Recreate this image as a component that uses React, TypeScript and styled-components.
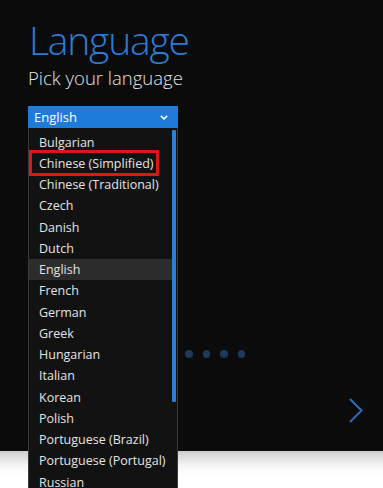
import React from "react";
import styled, { createGlobalStyle } from "styled-components";

const Global = createGlobalStyle`
  html, body { margin: 0; padding: 0; background: #ffffff; }
  body { font-family: "Open Sans", "Noto Sans", sans-serif; }
`;

const Page = styled.div`
  width: 383px;
  height: 488px;
  display: flex;
  flex-direction: column;
  overflow: hidden;
`;

const Screen = styled.section`
  height: 451px;
  background: #0b0b0b;
  display: flex;
  flex-direction: column;
  padding: 0 0 0 28px;
  box-sizing: border-box;
`;

const Shade = styled.div`
  flex: 1;
  background: linear-gradient(#cdcdcd 0px, #f4f4f4 14px, #ffffff 24px);
`;

const Title = styled.h1`
  margin: 15px 0 0 1px;
  font-family: "Open Sans", sans-serif;
  font-weight: 300;
  font-size: 39px;
  line-height: 50px;
  color: #2a7dd4;
  letter-spacing: -1.2px;
`;

const Subtitle = styled.h2`
  margin: 0 0 0 0;
  font-family: "Open Sans", sans-serif;
  font-weight: 300;
  font-size: 18.5px;
  line-height: 26px;
  color: #e2e2e2;
`;

const SelectWrap = styled.div`
  position: relative;
  margin-top: 15px;
  width: 150px;
  z-index: 2;
`;

const Select = styled.div`
  height: 22px;
  background: #1f7ad8;
  display: flex;
  align-items: center;
  justify-content: space-between;
  padding: 0 10px 0 6px;
  color: #ffffff;
  font-size: 13px;
`;

const Menu = styled.div`
  position: absolute;
  top: 22px;
  left: 0;
  width: 150px;
  box-sizing: border-box;
  background: #121212;
  border: 1px solid #3a3a3a;
  border-top: none;
  display: flex;
`;

const Items = styled.ul`
  list-style: none;
  margin: 0;
  padding: 3.6px 0 0 0;
  flex: 1;
`;

const Item = styled.li<{ $active?: boolean; $marked?: boolean }>`
  position: relative;
  height: 21.25px;
  line-height: 21.25px;
  padding-left: 10px;
  font-size: 12.5px;
  color: #e4e4e4;
  white-space: nowrap;
  background: ${(p) => (p.$active ? "#2c2c2c" : "transparent")};
  ${(p) =>
    p.$marked
      ? `&::after {
          content: "";
          position: absolute;
          left: 0;
          top: -2.6px;
          width: 130px;
          height: 26px;
          box-sizing: border-box;
          border: 3px solid #e01515;
        }`
      : ""}
`;

const Track = styled.div`
  width: 5px;
  padding-top: 2px;
`;

const Thumb = styled.div`
  width: 4px;
  height: 272px;
  background: #2b7fd6;
  border-radius: 1px;
`;

const Dots = styled.div`
  display: flex;
  gap: 10px;
  margin-top: 222px;
  padding-left: 157px;
`;

const Dot = styled.span`
  width: 7.5px;
  height: 7.5px;
  border-radius: 50%;
  background: #1d3a5a;
`;

const NextRow = styled.div`
  display: flex;
  justify-content: flex-end;
  padding-right: 20px;
  margin-top: 40px;
`;

const languages = [
  "Bulgarian",
  "Chinese (Simplified)",
  "Chinese (Traditional)",
  "Czech",
  "Danish",
  "Dutch",
  "English",
  "French",
  "German",
  "Greek",
  "Hungarian",
  "Italian",
  "Korean",
  "Polish",
  "Portuguese (Brazil)",
  "Portuguese (Portugal)",
  "Russian",
];

export default function App() {
  return (
    <Page>
      <Global />
      <Screen>
        <Title>Language</Title>
        <Subtitle>Pick your language</Subtitle>
        <SelectWrap>
          <Select>
            <span>English</span>
            <svg width="8" height="5" viewBox="0 0 8 5">
              <polyline points="0.8,0.8 4,3.8 7.2,0.8" fill="none" stroke="#fff" strokeWidth="1.6" />
            </svg>
          </Select>
          <Menu>
            <Items>
              {languages.map((l) => (
                <Item key={l} $active={l === "English"} $marked={l === "Chinese (Simplified)"}>
                  {l}
                </Item>
              ))}
            </Items>
            <Track>
              <Thumb />
            </Track>
          </Menu>
        </SelectWrap>
        <Dots>
          <Dot />
          <Dot />
          <Dot />
          <Dot />
        </Dots>
        <NextRow>
          <svg width="14" height="25" viewBox="0 0 14 25">
            <polyline points="1,1 12.5,12.5 1,24" fill="none" stroke="#2a6cb8" strokeWidth="2" />
          </svg>
        </NextRow>
      </Screen>
      <Shade />
    </Page>
  );
}
